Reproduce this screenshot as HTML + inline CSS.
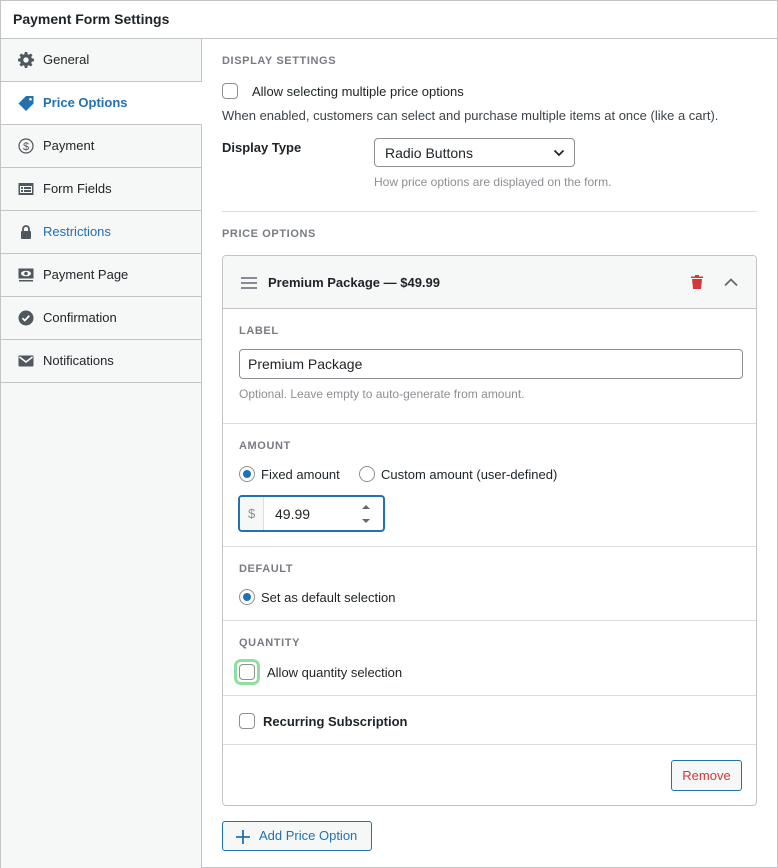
<!DOCTYPE html>
<html><head><meta charset="utf-8"><style>
*{box-sizing:border-box;margin:0;padding:0}
body{width:778px;height:868px;background:#fff;font-family:"Liberation Sans",sans-serif;font-size:13px;color:#1d2327;position:relative;overflow:hidden}
.a{position:absolute}
.frame{left:0;top:0;width:778px;height:868px;border:1px solid #c3c4c7}
.side{left:1px;top:39px;width:201px;height:829px;background:#f6f7f7;border-right:1px solid #c3c4c7}
.item{position:absolute;left:0;width:200px;height:43px;border-bottom:1px solid #c3c4c7;line-height:42px;padding-left:42px;font-size:13px;color:#1d2327}
.item svg{position:absolute;left:17px;top:13px}
.lbl{font-size:11px;font-weight:bold;color:#787c82;letter-spacing:.6px}
.cb{width:16px;height:16px;border:1px solid #8c8f94;border-radius:4px;background:#fff}
.rd{width:16px;height:16px;border:1px solid #8c8f94;border-radius:50%;background:#fff}
.rd.on::after{content:"";position:absolute;left:3px;top:3px;width:8px;height:8px;border-radius:50%;background:#2271b1}
.hl{height:1px;background:#dcdcde}
</style></head><body>
<div class="a frame"></div>
<div class="a" style="left:1px;top:1px;width:776px;height:38px;border-bottom:1px solid #c3c4c7;"></div>
<div class="a" style="left:13px;top:11px;font-size:14px;font-weight:bold">Payment Form Settings</div>
<div class="a side">
 <div class="item" style="top:0"><svg width="16" height="16" viewBox="0 0 16 16"><path fill="#50575e" d="M6.8 0h2.4l.4 2.2 1.4.6 1.8-1.3 1.7 1.7-1.3 1.8.6 1.4 2.2.4v2.4l-2.2.4-.6 1.4 1.3 1.8-1.7 1.7-1.8-1.3-1.4.6-.4 2.2H6.8l-.4-2.2-1.4-.6-1.8 1.3-1.7-1.7 1.3-1.8-.6-1.4L0 9.2V6.8l2.2-.4.6-1.4-1.3-1.8 1.7-1.7 1.8 1.3 1.4-.6zM8 5.3A2.7 2.7 0 1 0 8 10.7 2.7 2.7 0 1 0 8 5.3z"/></svg>General</div>
 <div class="item" style="top:43px;background:#fff;color:#2271b1;font-weight:bold;width:201px"><svg width="17" height="16" viewBox="0 0 17 16"><path fill="#2271b1" d="M8 1h7.5v7.5L8 16 0.5 8.5zM12.5 3a1.3 1.3 0 1 0 0 2.6 1.3 1.3 0 1 0 0-2.6z"/></svg>Price Options</div>
 <div class="item" style="top:86px"><svg width="16" height="16" viewBox="0 0 16 16"><circle cx="8" cy="8" r="7" fill="none" stroke="#50575e" stroke-width="1.2"/><text x="8" y="12" font-size="11" text-anchor="middle" fill="#50575e" font-family="Liberation Sans">$</text></svg>Payment</div>
 <div class="item" style="top:129px"><svg width="16" height="16" viewBox="0 0 16 16"><rect x="0.5" y="2" width="15" height="12" fill="#50575e"/><rect x="2" y="5" width="12" height="7" fill="#fff"/><rect x="3" y="6" width="2" height="2" fill="#50575e"/><rect x="6" y="6" width="7" height="2" fill="#50575e"/><rect x="3" y="9" width="2" height="2" fill="#50575e"/><rect x="6" y="9" width="7" height="2" fill="#50575e"/></svg>Form Fields</div>
 <div class="item" style="top:172px;color:#2271b1"><svg width="16" height="16" viewBox="0 0 16 16"><path d="M5 7V5a3 3 0 0 1 6 0v2" fill="none" stroke="#50575e" stroke-width="1.8"/><rect x="3" y="7" width="10" height="8" rx="1" fill="#50575e"/></svg>Restrictions</div>
 <div class="item" style="top:215px"><svg width="16" height="16" viewBox="0 0 16 16"><rect x="0.5" y="1.5" width="15" height="10" fill="#50575e"/><ellipse cx="8" cy="6.5" rx="5" ry="2.8" fill="#fff"/><circle cx="8" cy="6.5" r="1.8" fill="#50575e"/><rect x="1" y="13" width="14" height="1.5" fill="#50575e"/></svg>Payment Page</div>
 <div class="item" style="top:258px"><svg width="16" height="16" viewBox="0 0 16 16"><circle cx="8" cy="8" r="7.5" fill="#50575e"/><path d="M4.5 8.2l2.3 2.3 4.5-4.7" fill="none" stroke="#fff" stroke-width="1.8"/></svg>Confirmation</div>
 <div class="item" style="top:301px"><svg width="16" height="16" viewBox="0 0 16 16"><rect x="0.5" y="2.5" width="15" height="11" rx="1" fill="#50575e"/><path d="M1.5 4l6.5 5 6.5-5" fill="none" stroke="#fff" stroke-width="1.5"/></svg>Notifications</div>
</div>

<div class="a lbl" style="left:222px;top:55px">DISPLAY SETTINGS</div>
<div class="a cb" style="left:222px;top:83px"></div>
<div class="a" style="left:252px;top:84px">Allow selecting multiple price options</div>
<div class="a" style="left:222px;top:108px;color:#3c434a">When enabled, customers can select and purchase multiple items at once (like a cart).</div>
<div class="a" style="left:222px;top:140px;font-weight:bold">Display Type</div>
<div class="a" style="left:374px;top:138px;width:201px;height:29px;border:1px solid #8c8f94;border-radius:4px;padding:6px 0 0 10px;font-size:14px">Radio Buttons
 <svg class="a" style="right:9px;top:10px" width="12" height="8" viewBox="0 0 12 8"><path d="M1.5 1.5l4.5 4.5 4.5-4.5" fill="none" stroke="#1d2327" stroke-width="1.7"/></svg></div>
<div class="a" style="left:374px;top:175px;font-size:12px;color:#8c8f94">How price options are displayed on the form.</div>
<div class="a hl" style="left:222px;top:211px;width:535px"></div>
<div class="a lbl" style="left:222px;top:228px">PRICE OPTIONS</div>

<div class="a" style="left:222px;top:255px;width:535px;height:551px;border:1px solid #c3c4c7;border-radius:4px;overflow:hidden">
 <div class="a" style="left:0;top:0;width:533px;height:53px;background:#f6f7f7;border-bottom:1px solid #c3c4c7"></div>
 <svg class="a" style="left:18px;top:21px" width="16" height="12" viewBox="0 0 16 12"><path d="M0 1h16M0 6h16M0 11h16" stroke="#646970" stroke-width="1.6"/></svg>
 <div class="a" style="left:45px;top:19px;font-weight:bold">Premium Package — $49.99</div>
 <svg class="a" style="left:468px;top:19px" width="12" height="14" viewBox="0 0 12 14"><path fill="#d63638" d="M4 0h4v1.5h4V3H0V1.5h4zM1 4h10l-1 10H2z"/></svg>
 <svg class="a" style="left:501px;top:22px" width="14" height="9" viewBox="0 0 14 9"><path d="M1 7.5l6-6 6 6" fill="none" stroke="#646970" stroke-width="1.8"/></svg>

 <div class="a lbl" style="left:16px;top:69px">LABEL</div>
 <div class="a" style="left:16px;top:93px;width:504px;height:30px;border:1px solid #8c8f94;border-radius:4px;padding:6px 0 0 8px;font-size:14px">Premium Package</div>
 <div class="a" style="left:16px;top:131px;font-size:12px;color:#8c8f94">Optional. Leave empty to auto-generate from amount.</div>
 <div class="a hl" style="left:0;top:167px;width:533px"></div>

 <div class="a lbl" style="left:16px;top:184px">AMOUNT</div>
 <div class="a rd on" style="left:16px;top:210px"></div>
 <div class="a" style="left:38px;top:211px">Fixed amount</div>
 <div class="a rd" style="left:136px;top:210px"></div>
 <div class="a" style="left:158px;top:211px">Custom amount (user-defined)</div>
 <div class="a" style="left:15px;top:239px;width:147px;height:37px;border:2px solid #2271b1;border-radius:4px;overflow:hidden">
  <div class="a" style="left:0;top:0;width:24px;height:33px;background:#f6f7f7;border-right:1px solid #dcdcde;color:#8c8f94;padding:9px 0 0 8px">$</div>
  <div class="a" style="left:35px;top:9px;font-size:14px">49.99</div>
  <svg class="a" style="left:121px;top:6px" width="10" height="22" viewBox="0 0 10 22"><path d="M1 6l4-4 4 4zM1 16l4 4 4-4z" fill="#646970"/></svg>
 </div>
 <div class="a hl" style="left:0;top:290px;width:533px"></div>

 <div class="a lbl" style="left:16px;top:307px">DEFAULT</div>
 <div class="a rd on" style="left:16px;top:333px"></div>
 <div class="a" style="left:38px;top:334px">Set as default selection</div>
 <div class="a hl" style="left:0;top:364px;width:533px"></div>

 <div class="a lbl" style="left:16px;top:381px">QUANTITY</div>
 <div class="a" style="left:11px;top:403px;width:26px;height:26px;border:3px solid #8fe0a0;border-radius:7px"></div>
 <div class="a cb" style="left:16px;top:408px"></div>
 <div class="a" style="left:44px;top:409px">Allow quantity selection</div>
 <div class="a hl" style="left:0;top:439px;width:533px"></div>

 <div class="a cb" style="left:16px;top:457px"></div>
 <div class="a" style="left:40px;top:458px;font-weight:bold">Recurring Subscription</div>
 <div class="a hl" style="left:0;top:488px;width:533px"></div>

 <div class="a" style="left:448px;top:504px;width:71px;height:31px;border:1px solid #2271b1;border-radius:3px;background:#f6f7f7;color:#d63638;text-align:center;line-height:29px">Remove</div>
</div>

<div class="a" style="left:222px;top:821px;width:150px;height:30px;border:1px solid #2271b1;border-radius:3px;background:#f6f7f7;color:#2271b1;line-height:28px;padding-left:36px">Add Price Option</div>
<svg class="a" style="left:235px;top:829px" width="16" height="16" viewBox="0 0 16 16"><path d="M8 1v14M1 8h14" stroke="#2271b1" stroke-width="1.8"/></svg>
</body></html>
